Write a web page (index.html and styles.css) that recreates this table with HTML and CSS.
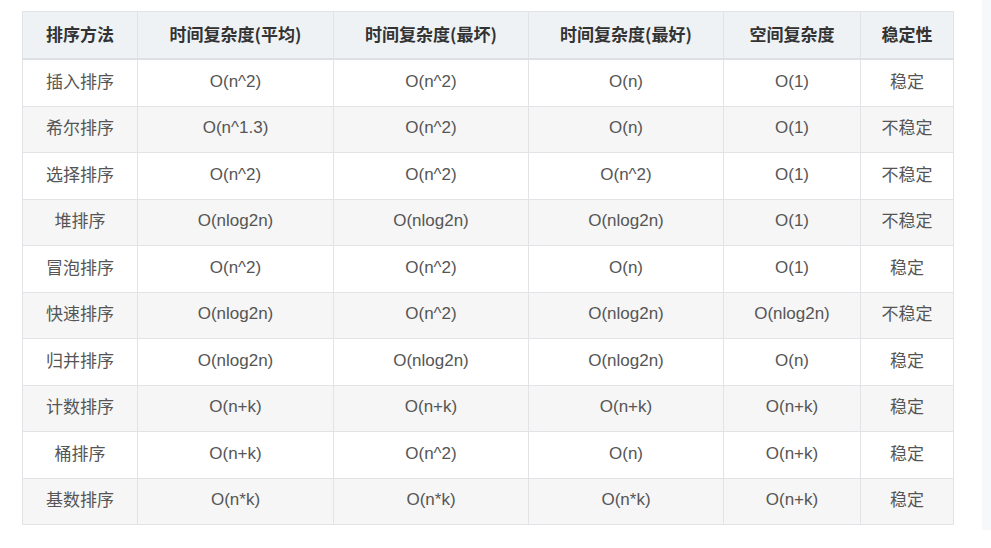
FILE: index.html
```html
<!DOCTYPE html>
<html lang="zh-CN">
<head>
<meta charset="utf-8">
<title>排序算法复杂度</title>
<link rel="stylesheet" href="styles.css">
</head>
<body>
<div class="page">
  <div class="content">
    <table class="sort-table">
      <colgroup>
        <col class="c1"><col class="c2"><col class="c3"><col class="c4"><col class="c5"><col class="c6">
      </colgroup>
      <thead>
        <tr><th>排序方法</th><th>时间复杂度(平均)</th><th>时间复杂度(最坏)</th><th>时间复杂度(最好)</th><th>空间复杂度</th><th>稳定性</th></tr>
      </thead>
      <tbody>
        <tr><td class="zh">插入排序</td><td>O(n^2)</td><td>O(n^2)</td><td>O(n)</td><td>O(1)</td><td class="zh">稳定</td></tr>
        <tr><td class="zh">希尔排序</td><td>O(n^1.3)</td><td>O(n^2)</td><td>O(n)</td><td>O(1)</td><td class="zh">不稳定</td></tr>
        <tr><td class="zh">选择排序</td><td>O(n^2)</td><td>O(n^2)</td><td>O(n^2)</td><td>O(1)</td><td class="zh">不稳定</td></tr>
        <tr><td class="zh">堆排序</td><td>O(nlog2n)</td><td>O(nlog2n)</td><td>O(nlog2n)</td><td>O(1)</td><td class="zh">不稳定</td></tr>
        <tr><td class="zh">冒泡排序</td><td>O(n^2)</td><td>O(n^2)</td><td>O(n)</td><td>O(1)</td><td class="zh">稳定</td></tr>
        <tr><td class="zh">快速排序</td><td>O(nlog2n)</td><td>O(n^2)</td><td>O(nlog2n)</td><td>O(nlog2n)</td><td class="zh">不稳定</td></tr>
        <tr><td class="zh">归并排序</td><td>O(nlog2n)</td><td>O(nlog2n)</td><td>O(nlog2n)</td><td>O(n)</td><td class="zh">稳定</td></tr>
        <tr><td class="zh">计数排序</td><td>O(n+k)</td><td>O(n+k)</td><td>O(n+k)</td><td>O(n+k)</td><td class="zh">稳定</td></tr>
        <tr><td class="zh">桶排序</td><td>O(n+k)</td><td>O(n^2)</td><td>O(n)</td><td>O(n+k)</td><td class="zh">稳定</td></tr>
        <tr><td class="zh">基数排序</td><td>O(n*k)</td><td>O(n*k)</td><td>O(n*k)</td><td>O(n+k)</td><td class="zh">稳定</td></tr>
      </tbody>
    </table>
  </div>
  <div class="side-strip"></div>
</div>
</body>
</html>
```
FILE: styles.css
```css
html, body {
  margin: 0;
  padding: 0;
  background: #ffffff;
}

.page {
  display: flex;
  width: 991px;
  height: 548px;
  font-family: "Liberation Sans", Arial, "Noto Sans CJK SC", sans-serif;
}

.content {
  padding: 11px 0 0 22px;
}

.side-strip {
  margin-left: auto;
  width: 9px;
  height: 530px;
  background: #f7f8fa;
}

.sort-table {
  border-collapse: collapse;
  table-layout: fixed;
  width: 931px;
  font-size: 17px;
  color: #555555;
}

.c1 { width: 115px; }
.c2 { width: 196px; }
.c3 { width: 195px; }
.c4 { width: 195px; }
.c5 { width: 137px; }
.c6 { width: 93px; }

.sort-table th,
.sort-table td {
  border: 1px solid #e1e3e6;
  text-align: center;
  vertical-align: middle;
  padding: 0;
}

.sort-table th {
  height: 43px;
  padding-bottom: 3px;
  background: #eff2f5;
  color: #333333;
  font-weight: bold;
  font-family: "Noto Sans CJK SC", "Liberation Sans", sans-serif;
  line-height: 20px;
  border-bottom: 2px solid #dcdfe3;
}

.sort-table td {
  height: 43.5px;
  padding-bottom: 2px;
  background: #ffffff;
}

.sort-table td.zh {
  height: 41.5px;
  padding-bottom: 4px;
  font-family: "Noto Sans CJK SC", sans-serif;
  line-height: 20px;
}

.sort-table tbody tr:nth-child(even) td {
  background: #f6f6f6;
}
```
